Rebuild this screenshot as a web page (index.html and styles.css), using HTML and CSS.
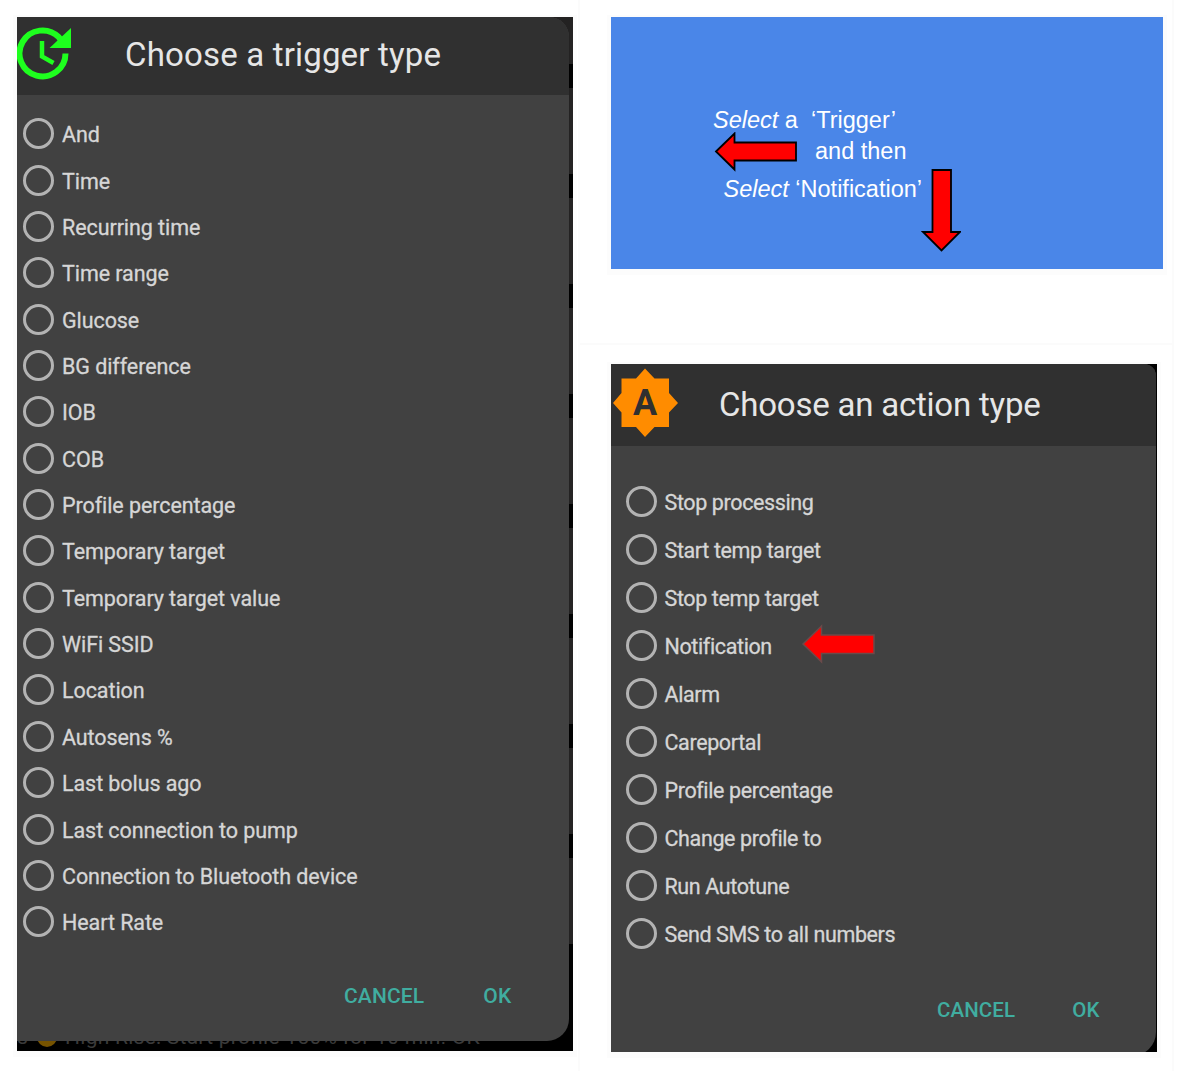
FILE: index.html
```
<!DOCTYPE html>
<html lang="en">
<head>
<meta charset="utf-8">
<title>Automation: trigger and action</title>
<link rel="stylesheet" href="styles.css">
</head>
<body>
<main class="board">
  <section class="screen trigger">
    <p class="behind"><span class="start">s</span><span class="bulb"></span><span>High Rise: Start profile 150% for 10 min! OK</span></p>
    <div class="dialog">
      <header class="head">
        <svg class="clock" viewBox="0 0 56 56"><path d="M45 16.500L41.800 12.200A23 23 0 1 0 48.500 28.500" fill="none"/><path class="fill" d="M54 3v20H32.500z"/><path class="hand" d="M25 16v15.500l11.500 6.500" fill="none"/></svg>
        <h1>Choose a trigger type</h1>
      </header>
      <ul class="options">
        <li><i></i>And</li>
        <li><i></i>Time</li>
        <li><i></i>Recurring time</li>
        <li><i></i>Time range</li>
        <li><i></i>Glucose</li>
        <li><i></i>BG difference</li>
        <li><i></i>IOB</li>
        <li><i></i>COB</li>
        <li><i></i>Profile percentage</li>
        <li><i></i>Temporary target</li>
        <li><i></i>Temporary target value</li>
        <li><i></i>WiFi SSID</li>
        <li><i></i>Location</li>
        <li><i></i>Autosens %</li>
        <li><i></i>Last bolus ago</li>
        <li><i></i>Last connection to pump</li>
        <li><i></i>Connection to Bluetooth device</li>
        <li><i></i>Heart Rate</li>
      </ul>
      <footer class="buttons"><span>CANCEL</span><span>OK</span></footer>
    </div>
  </section>
  <div class="right">
    <section class="note">
      <p class="line one"><em>Select</em> a&nbsp; ‘Trigger’</p>
      <p class="line two">and then</p>
      <p class="line three"><em>Select</em> ‘Notification’</p>
      <svg class="arrow to-left" viewBox="0 0 84 40"><path d="M2 19.500L20.500 1.500V10.500H82V28.500H20.500V37.500z"/></svg>
      <svg class="arrow to-down" viewBox="0 0 40 84"><path d="M11.500 1H30V63H39L20.500 81.500L2 63H11.500z"/></svg>
    </section>
    <section class="screen action">
      <div class="dialog">
        <header class="head">
          <svg class="badge" viewBox="0 0 66 70"><path d="M33 .5L42.500 10.500H57V25L66 35L57 44.500V59H42.500L33 69L24 59H9.500V44.500L1 35L9.500 25V10.500H24z"/><text x="33" y="47">A</text></svg>
          <h1>Choose an action type</h1>
        </header>
        <ul class="options">
          <li><i></i>Stop processing</li>
          <li><i></i>Start temp target</li>
          <li><i></i>Stop temp target</li>
          <li><i></i>Notification<svg class="pointer" viewBox="0 0 76 40"><path d="M2 20L20.500 2V11H73V29.500H20.500V38z"/></svg></li>
          <li><i></i>Alarm</li>
          <li><i></i>Careportal</li>
          <li><i></i>Profile percentage</li>
          <li><i></i>Change profile to</li>
          <li><i></i>Run Autotune</li>
          <li><i></i>Send SMS to all numbers</li>
        </ul>
        <footer class="buttons"><span>CANCEL</span><span>OK</span></footer>
      </div>
    </section>
  </div>
</main>
</body>
</html>
```
FILE: styles.css
```
* { box-sizing: border-box; margin: 0; padding: 0; }
body { width: 1178px; height: 1071px; overflow: hidden; background: #fff; font-family: Roboto, "Liberation Sans", sans-serif; }
.board { display: flex; gap: 38px; padding: 17px 0 0 17px; height: 1071px; background: linear-gradient(#fbfbfb, #fbfbfb) 578px 0 / 2px 100% no-repeat, linear-gradient(#fbfbfb, #fbfbfb) 1172px 0 / 2px 100% no-repeat, linear-gradient(#fbfbfb, #fbfbfb) 580px 343px / 592px 2px no-repeat; }
.screen { position: relative; display: flex; align-items: flex-start; overflow: hidden; }
.screen, .note { box-shadow: 0 2px 0 4px #fcfcfc; }
.trigger { width: 556px; height: 1034px; background: linear-gradient(#000, #000) 0 929px / 100% 105px no-repeat, repeating-linear-gradient(#232222 0 47px, #000 47px 71px, #232222 71px 110px); }
.dialog { position: relative; display: flex; flex-direction: column; background: #414141; overflow: hidden; }
.trigger .dialog { width: 552px; height: 1024px; border-radius: 0 20px 22px 0; }
.head { display: flex; align-items: center; background: #303030; color: #e6e6e6; flex: none; }
.trigger .head { height: 78px; }
.clock { width: 56px; height: 56px; margin-top: -6px; fill: none; stroke: #1eff1e; stroke-width: 6; }
.clock .fill { fill: #1eff1e; stroke: none; }
.clock .hand { stroke-width: 4.500; }
h1 { font-weight: 400; font-size: 33px; line-height: 40px; letter-spacing: .17px; white-space: nowrap; }
.trigger h1 { margin-left: 52px; margin-top: -3px; }
.options { list-style: none; display: flex; flex-direction: column; flex: none; }
.options li { display: flex; align-items: center; gap: 8px; height: 46.37px; font-size: 21.5px; letter-spacing: -.08px; color: #d6d6d6; -webkit-text-stroke: .3px #d6d6d6; white-space: nowrap; }
.options i { width: 31px; height: 31px; border: 3px solid #b3b3b3; border-radius: 50%; flex: none; margin-top: -2px; }
.trigger .options { padding: 16.500px 0 0 6px; }
.buttons { display: flex; color: #40ada0; font-weight: 500; font-size: 21px; line-height: 24px; }
.trigger .buttons { padding: 38px 0 0 327px; gap: 59px; letter-spacing: .15px; }
.behind { position: absolute; left: 0; bottom: 2px; display: flex; align-items: center; font-size: 21px; letter-spacing: .25px; line-height: 24px; color: #3a3a3a; white-space: nowrap; }
.bulb { width: 20px; height: 20px; margin: 0 8px 0 9px; border-radius: 50%; background: #765300; }
.right { display: flex; flex-direction: column; gap: 95px; }
.note { position: relative; width: 552px; height: 252px; background: #4a86e8; color: #fff; font-family: "Liberation Sans", Arial, sans-serif; font-size: 23.500px; line-height: 28px; padding-top: 88.500px; white-space: nowrap; }
.one { padding-left: 102px; }
.two { padding: 3px 0 0 204px; }
.three { padding: 10px 0 0 112.500px; }
.arrow { position: absolute; fill: #f00; stroke: #000; stroke-width: 1.800; }
.to-left { left: 103px; top: 115px; width: 84px; height: 40px; }
.to-down { left: 310px; top: 152px; width: 40px; height: 84px; }
.action { width: 546px; height: 688px; background: #000; }
.action .dialog { width: 545px; height: 692px; border-radius: 0 12px 24px 0; }
.action .head { height: 82px; }
.badge { width: 66px; height: 70px; margin: -4px 0 0 1px; fill: #ff8c00; }
.badge text { font: 700 36px Roboto, sans-serif; fill: #303030; text-anchor: middle; }
.action h1 { margin: -1px 0 0 41px; letter-spacing: -.22px; }
.action .options { padding: 32.500px 0 0 15px; }
.action .options li { height: 48px; gap: 7.500px; letter-spacing: -.38px; }
.pointer { width: 76px; height: 40px; margin: -6px 0 0 21.500px; fill: #f00; stroke: #6b4a4a; stroke-width: 1.500; }
.action .buttons { padding: 39px 0 0 326px; gap: 57px; font-size: 20.500px; letter-spacing: .1px; }
```
